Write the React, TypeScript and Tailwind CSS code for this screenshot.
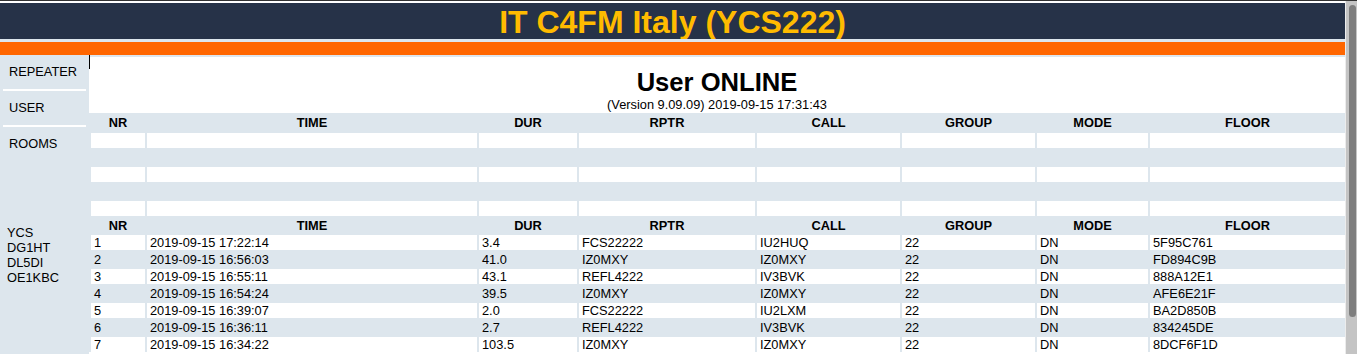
import React from 'react'

const cols = ['NR', 'TIME', 'DUR', 'RPTR', 'CALL', 'GROUP', 'MODE', 'FLOOR']

const rows = [
  ['1', '2019-09-15 17:22:14', '3.4', 'FCS22222', 'IU2HUQ', '22', 'DN', '5F95C761'],
  ['2', '2019-09-15 16:56:03', '41.0', 'IZ0MXY', 'IZ0MXY', '22', 'DN', 'FD894C9B'],
  ['3', '2019-09-15 16:55:11', '43.1', 'REFL4222', 'IV3BVK', '22', 'DN', '888A12E1'],
  ['4', '2019-09-15 16:54:24', '39.5', 'IZ0MXY', 'IZ0MXY', '22', 'DN', 'AFE6E21F'],
  ['5', '2019-09-15 16:39:07', '2.0', 'FCS22222', 'IU2LXM', '22', 'DN', 'BA2D850B'],
  ['6', '2019-09-15 16:36:11', '2.7', 'REFL4222', 'IV3BVK', '22', 'DN', '834245DE'],
  ['7', '2019-09-15 16:34:22', '103.5', 'IZ0MXY', 'IZ0MXY', '22', 'DN', '8DCF6F1D'],
]

const menu = ['REPEATER', 'USER', 'ROOMS']
const nodes = ['YCS', 'DG1HT', 'DL5DI', 'OE1KBC']

const HeaderRow = ({ tall }: { tall?: boolean }) => (
  <>
    {cols.map((c) => (
      <div
        key={c}
        className={`${tall ? 'h-[16px] leading-[16px]' : 'h-[15px] leading-[15px]'} text-center font-bold`}
      >
        {c}
      </div>
    ))}
  </>
)

const DataRow = ({ cells, white }: { cells: string[]; white: boolean }) => (
  <>
    {cells.map((v, i) => (
      <div
        key={i}
        className={`h-[15px] leading-[15px] pl-[3px] whitespace-nowrap overflow-hidden ${white ? 'bg-white' : ''}`}
      >
        {v}
      </div>
    ))}
  </>
)

export default function App() {
  const empty = ['', '', '', '', '', '', '', '']

  return (
    <div className="h-[354px] overflow-hidden bg-white text-black font-['Liberation_Sans',Arial,sans-serif] text-[12.8px]">
      <div className="h-[1px] bg-[#333333]" />
      <div className="flex h-[353px]">
        <div className="flex flex-col flex-1 min-w-0">
          <div className="h-[2px] bg-white" />
          <header className="h-[36px] bg-[#263248] flex items-center justify-center">
            <h1 className="text-[32px] font-bold leading-none text-[#ffbb00] pt-[1px]">IT C4FM Italy (YCS222)</h1>
          </header>
          <div className="h-[3px] bg-[#dde6ed]" />
          <div className="h-[13px] bg-[#ff6600]" />

          <div className="flex flex-1 min-h-0">
            {/* left menu */}
            <aside className="w-[89px] shrink-0 bg-[#dde6ed]">
              {menu.map((m, i) => (
                <div
                  key={m}
                  className={`mx-[3px] pl-[6px] h-[34px] flex items-center ${i < menu.length - 1 ? 'border-b-2 border-white box-content' : ''}`}
                >
                  {m}
                </div>
              ))}
              <div className="mt-[64px] pl-[7px] leading-[15px]">
                {nodes.map((n) => (
                  <div key={n}>{n}</div>
                ))}
              </div>
            </aside>

            <main className="relative flex-1 min-w-0 bg-white border-t-2 border-[#dde6ed]">
              <div className="absolute left-0 top-[-2px] w-px h-[14px] bg-black" />
              <div className="pt-[11px] text-center">
                <h2 className="text-[25.6px] font-bold leading-[29px]">User ONLINE</h2>
                <p className="leading-[16px]">(Version 9.09.09) 2019-09-15 17:31:43</p>
              </div>

              <div className="bg-[#dde6ed] pt-[2px] pl-[2px] grid grid-cols-[54px_330px_98px_176px_143px_133px_111px_1fr] gap-[2px]">
                <HeaderRow tall />
                {[0, 1, 2, 3, 4].map((i) => (
                  <DataRow key={'e' + i} cells={empty} white={i % 2 === 0} />
                ))}
                <HeaderRow />
                {rows.map((r, i) => (
                  <DataRow key={r[0]} cells={r} white={i % 2 === 0} />
                ))}
              </div>
            </main>
          </div>
        </div>

        {/* scrollbar */}
        <div className="w-[12px] shrink-0 bg-[#c4c4c4] border-l border-[#ececec] pt-[4px] pl-[3px]">
          <div className="w-[7px] h-[312px] rounded-full bg-[#7e7e7e]" />
        </div>
      </div>
    </div>
  )
}
